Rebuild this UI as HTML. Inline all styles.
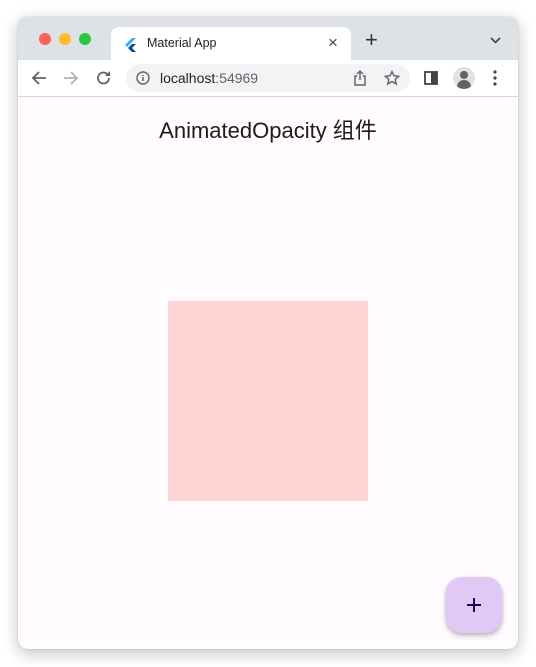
<!DOCTYPE html>
<html><head><meta charset="utf-8"><style>
body{margin:0;width:536px;height:667px;background:#fff;position:relative;overflow:hidden;font-family:"Liberation Sans","Noto Sans CJK SC",sans-serif}
.win{position:absolute;left:18px;top:17px;width:500px;height:632px;border-radius:10px;overflow:hidden;box-shadow:0 4px 16px rgba(0,0,0,.25),0 0 1px rgba(0,0,0,.3);background:#fffbfe}
.tabs{position:absolute;left:0;top:0;width:500px;height:43px;background:#dee1e6}
.dot{position:absolute;top:16px;width:12px;height:12px;border-radius:50%}
.tab{position:absolute;left:93px;top:10px;width:240px;height:34px;background:#fff;border-radius:8px 8px 0 0}
.bar{position:absolute;left:0;top:43px;width:500px;height:36px;background:#fff;border-bottom:1px solid #d5d5d5}
.url{position:absolute;left:108px;top:4px;width:284px;height:28px;border-radius:14px;background:#f1f3f4}
.t{position:absolute;font-size:13px;color:#202124}
</style></head><body>
<div class="win">
 <div class="tabs">
  <div class="dot" style="left:21px;background:#fe5f57"></div>
  <div class="dot" style="left:41px;background:#febc2e"></div>
  <div class="dot" style="left:61px;background:#28c840"></div>
  <div class="tab">
   <svg style="position:absolute;left:14px;top:11px" width="12" height="14" viewBox="0 0 12 14"><path d="M7 0L0 7l2 2 9-9z" fill="#42a5f5"/><path d="M7 6L3 10l4 4h4L7 10l4-4z" fill="#0d47a1"/></svg>
   <div class="t" style="left:36px;top:9px;font-size:12.5px">Material App</div>
   <div class="t" style="left:217px;top:6px;font-size:17px;color:#444">×</div>
  </div>
  <div class="t" style="left:347px;top:12px;font-size:22px;color:#333;line-height:22px">+</div>
  <svg style="position:absolute;left:472px;top:20px" width="11" height="7"><path d="M1 1l4.5 4.5L10 1" stroke="#444" stroke-width="1.6" fill="none"/></svg>
 </div>
 <div class="bar">
  <svg style="position:absolute;left:13px;top:10px" width="16" height="16"><path d="M15 8H2M8 2L2 8l6 6" stroke="#5f6368" stroke-width="1.8" fill="none"/></svg>
  <svg style="position:absolute;left:45px;top:10px" width="16" height="16"><path d="M1 8h13M8 2l6 6-6 6" stroke="#b0b3b7" stroke-width="1.8" fill="none"/></svg>
  <svg style="position:absolute;left:77px;top:9px" width="18" height="18"><path d="M14 9a5.5 5.5 0 1 1-1.6-3.9" stroke="#5f6368" stroke-width="1.8" fill="none"/><path d="M15 2v5h-5z" fill="#5f6368"/></svg>
  <div class="url">
   <svg style="position:absolute;left:10px;top:7px" width="14" height="14"><circle cx="7" cy="7" r="6" stroke="#5f6368" stroke-width="1.4" fill="none"/><path d="M7 6v4M7 4v1" stroke="#5f6368" stroke-width="1.5"/></svg>
   <div class="t" style="left:34px;top:6px;font-size:14px">localhost<span style="color:#5f6368">:54969</span></div>
   <svg style="position:absolute;left:227px;top:6px" width="14" height="16"><path d="M4 6H2v9h10V6h-2M7 10V1M4 4l3-3 3 3" stroke="#5f6368" stroke-width="1.4" fill="none"/></svg>
   <svg style="position:absolute;left:258px;top:6px" width="16" height="16"><path d="M8 1.5l2 4.3 4.6.5-3.4 3.1 1 4.6L8 11.6 3.8 14l1-4.6L1.4 6.3 6 5.8z" stroke="#5f6368" stroke-width="1.4" fill="none"/></svg>
  </div>
  <svg style="position:absolute;left:406px;top:11px" width="14" height="14"><rect x="1" y="1" width="12" height="12" stroke="#444" stroke-width="1.8" fill="none"/><rect x="7" y="1" width="6" height="12" fill="#444"/></svg>
  <div style="position:absolute;left:435px;top:7px;width:22px;height:22px;border-radius:50%;background:#dfe1e5;overflow:hidden"><div style="position:absolute;left:7px;top:4px;width:8px;height:8px;border-radius:50%;background:#5f6368"></div><div style="position:absolute;left:4px;top:13px;width:14px;height:10px;border-radius:7px 7px 0 0;background:#5f6368"></div></div>
  <svg style="position:absolute;left:475px;top:10px" width="4" height="16"><circle cx="2" cy="2" r="1.6" fill="#444"/><circle cx="2" cy="8" r="1.6" fill="#444"/><circle cx="2" cy="14" r="1.6" fill="#444"/></svg>
 </div>
 <div style="position:absolute;left:0;top:96px;width:500px;text-align:center;font-size:22px;color:#1c1b1f">AnimatedOpacity 组件</div>
 <div style="position:absolute;left:150px;top:284px;width:200px;height:200px;background:#fed5d5"></div>
 <div style="position:absolute;left:428px;top:560px;width:56px;height:56px;border-radius:16px;background:#e0c9f4;box-shadow:0 3px 6px rgba(0,0,0,.2),0 1px 3px rgba(0,0,0,.15)">
  <svg style="position:absolute;left:20px;top:20px" width="16" height="16"><path d="M8 1v14M1 8h14" stroke="#21005d" stroke-width="2"/></svg>
 </div>
</div>
</body></html>
